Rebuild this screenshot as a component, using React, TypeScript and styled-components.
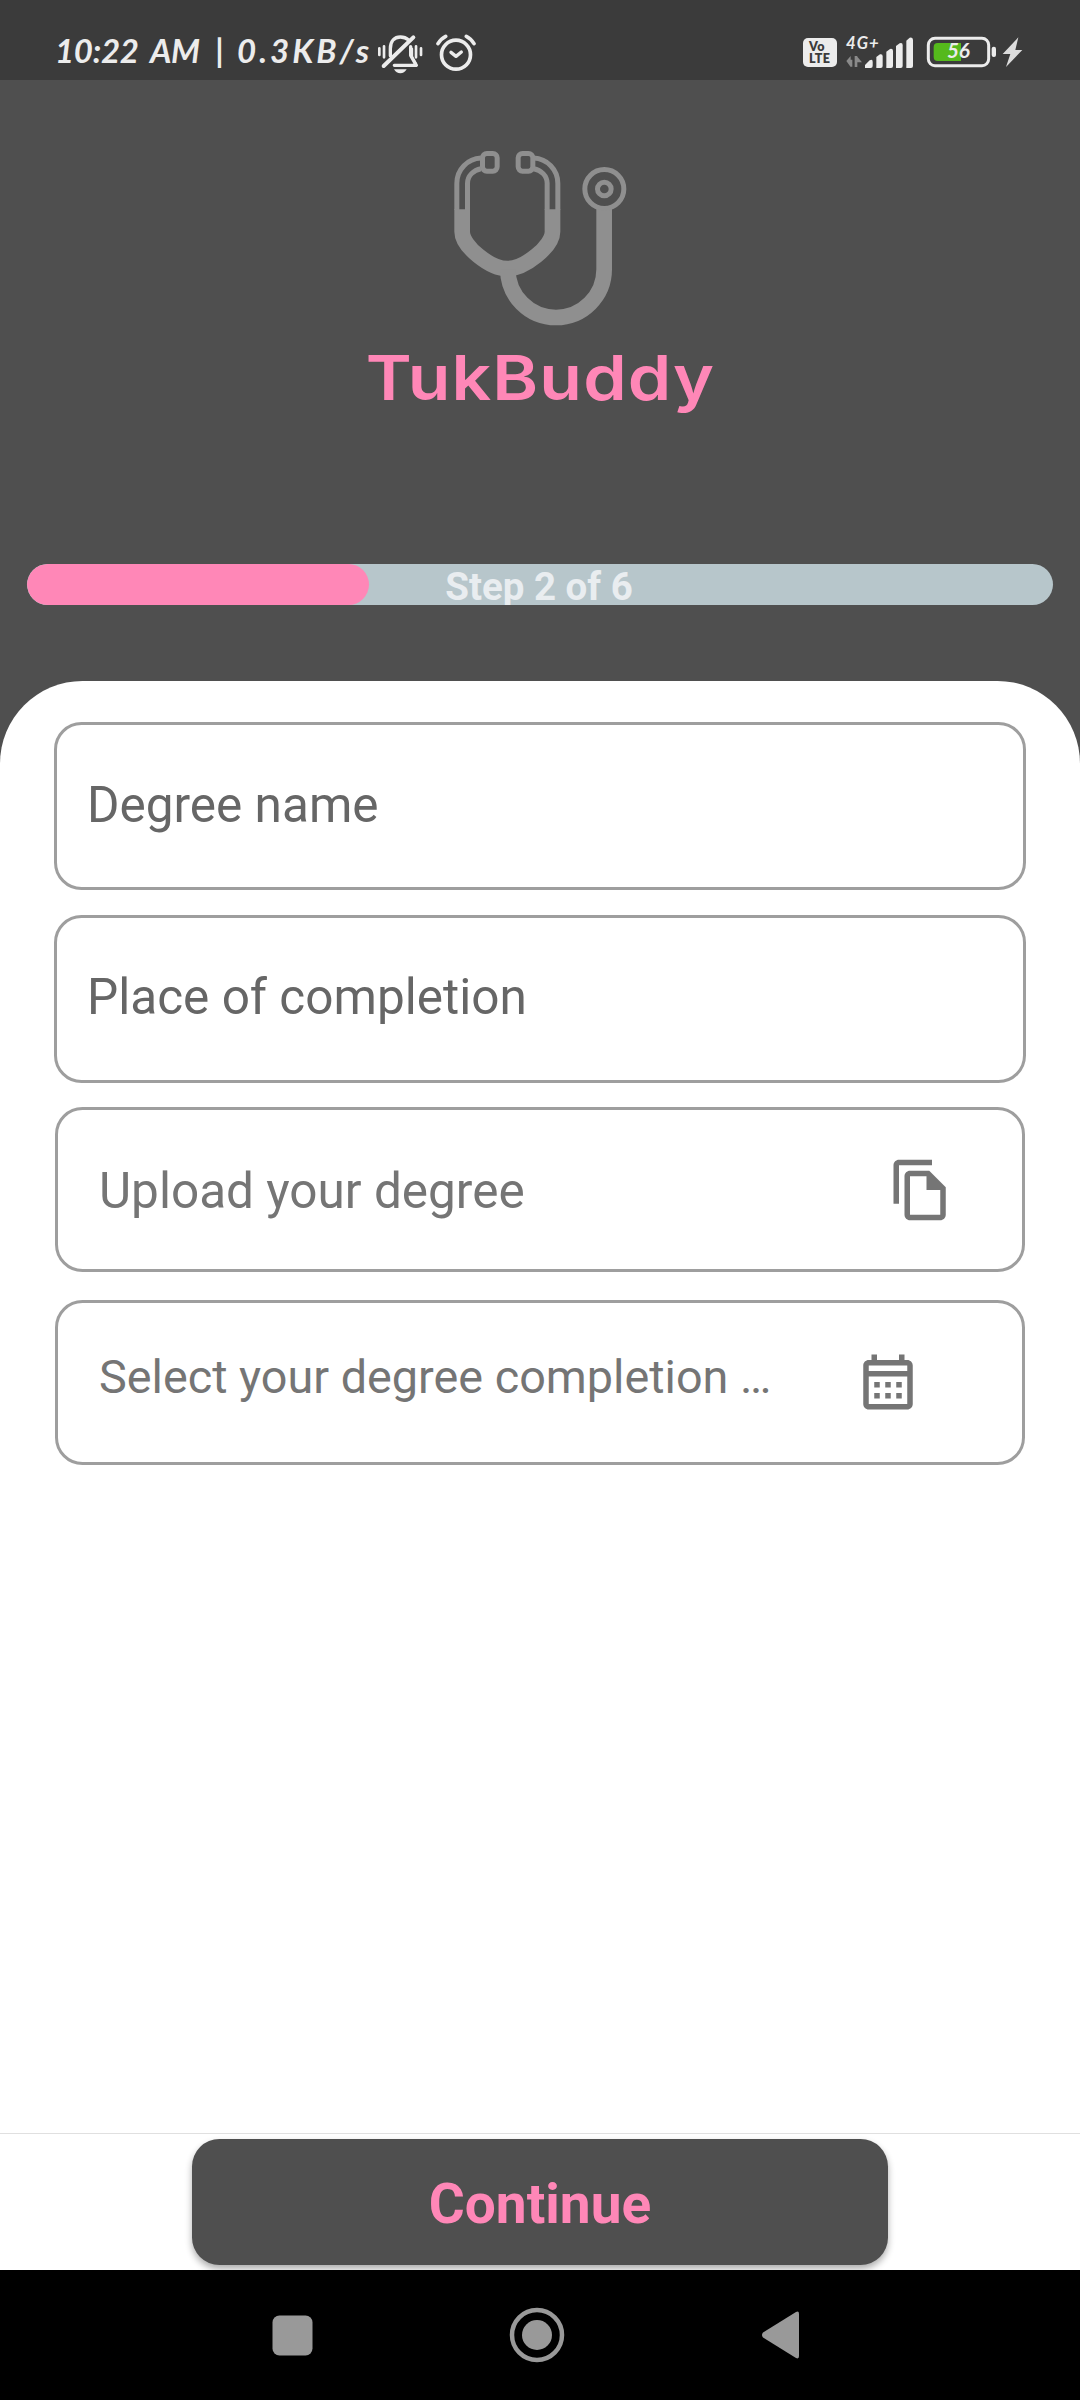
import React from 'react';
import styled, { createGlobalStyle } from 'styled-components';

const Global = createGlobalStyle`
  * { box-sizing: border-box; }
  body { margin: 0; background: #fff; font-family: Roboto, sans-serif; }
`;

const Screen = styled.div`
  width: 1080px;
  height: 2400px;
  display: flex;
  flex-direction: column;
  background: #4f4f4f;
  overflow: hidden;
`;

const StatusBar = styled.header`
  height: 80px;
  flex: none;
  display: flex;
  align-items: flex-start;
  padding: 34px 57px 0 55px;
  background: #3b3b3b;
  color: #ececec;
`;

const Clock = styled.div`
  display: flex;
  width: 322px;
  height: 36px;
  margin-top: -2px;
  font: italic 700 33px/36px Lato, sans-serif;
  white-space: pre;
`;

const ClockPart = styled.span<{ $width: number; $spacing: number }>`
  width: ${(p) => p.$width}px;
  letter-spacing: ${(p) => p.$spacing}px;
`;

const Glyph = styled.svg<{ $gap?: number }>`
  display: block;
  flex: none;
  margin-left: ${(p) => p.$gap ?? 0}px;
`;

const Spacer = styled.div`
  flex: 1;
`;

const VoLte = styled.div`
  width: 34px;
  height: 29px;
  margin-top: 4px;
  padding: 3px 0 0 6px;
  border-radius: 5px;
  background: #ececec;
  color: #3b3b3b;
  font: 800 12.5px/12px Lato, sans-serif;
  letter-spacing: 0.3px;
`;

const Brand = styled.section`
  height: 484px;
  flex: none;
  display: flex;
  flex-direction: column;
  align-items: center;
  padding-top: 70px;
`;

const BrandName = styled.h1`
  margin: 13px 0 0;
  font: 600 62px/76px Inter, sans-serif;
  letter-spacing: 1px;
  color: #ff87b7;
  white-space: nowrap;
  transform: scaleX(1.124);
`;

const Progress = styled.div`
  position: relative;
  flex: none;
  width: 1026px;
  height: 41.25px;
  margin: 0 27px 75.75px;
  border-radius: 21px;
  background: #b7c6cb;
  overflow: hidden;
`;

const ProgressFill = styled.div`
  height: 100%;
  border-radius: 21px;
  background: #ff87b7;
`;

const ProgressLabel = styled.div`
  position: absolute;
  inset: 0;
  padding-right: 2px;
  text-align: center;
  font-size: 38.5px;
  font-weight: 700;
  line-height: 45px;
  color: #e9edf0;
`;

const Sheet = styled.main`
  flex: 1;
  display: flex;
  flex-direction: column;
  padding: 41px 54px 0;
  border-radius: 82.5px 82.5px 0 0;
  background: #fff;
`;

const TextField = styled.div`
  height: 168px;
  margin-bottom: 24.5px;
  padding: 0 30px 3px;
  display: flex;
  align-items: center;
  border: 3px solid #9e9e9e;
  border-radius: 27.5px;
  font-size: 49.5px;
  line-height: 58px;
  color: #666;
`;

const PickerField = styled.div<{ $iconEnd: number }>`
  height: 165px;
  margin: 0 1px 27.5px;
  padding: 0 ${(p) => p.$iconEnd}px 0 41px;
  display: flex;
  align-items: center;
  justify-content: space-between;
  border: 3px solid #9e9e9e;
  border-radius: 27.5px;
  color: #757575;
`;

const PickerText = styled.span<{ $size: number; $drop?: number; $lift?: number }>`
  font-size: ${(p) => p.$size}px;
  line-height: 58px;
  padding-top: ${(p) => p.$drop ?? 0}px;
  padding-bottom: ${(p) => p.$lift ?? 0}px;
  white-space: nowrap;
`;

const Footer = styled.footer`
  height: 137px;
  flex: none;
  padding-top: 5px;
  display: flex;
  justify-content: center;
  align-items: flex-start;
  border-top: 1px solid #e0e0e0;
  background: #fff;
  overflow: hidden;
`;

const ContinueButton = styled.button`
  width: 696px;
  height: 126px;
  padding: 4px 0 0;
  border: 0;
  border-radius: 27.5px;
  background: #4f4f4f;
  box-shadow: 0 4px 7px rgba(0, 0, 0, 0.32);
  color: #ff87b7;
  font: 700 55px/64px Roboto, sans-serif;
`;

const NavBar = styled.nav`
  height: 130px;
  flex: none;
  display: flex;
  align-items: center;
  padding-left: 272px;
  background: #000;
`;

function BellOffIcon() {
  return (
    <Glyph width="46.7" height="40" viewBox="1040 68 140 120" fill="none" stroke="#ececec" strokeLinecap="round">
      <path d="M1080 133V112C1080 88 1093 77 1110 77C1121 77 1128 80 1135 86" strokeWidth="10" />
      <path d="M1149 78L1060 164" strokeWidth="12" />
      <path d="M1141 106V132L1158 162H1092" strokeWidth="10" strokeLinejoin="round" />
      <path d="M1146 112V138L1156 154" strokeWidth="5" />
      <path d="M1091 174H1129Q1122 186 1110 186Q1098 186 1091 174Z" fill="#ececec" stroke="none" />
      <path d="M1047 111V131M1061 105V138M1157 105V138M1172 111V131" strokeWidth="8" />
    </Glyph>
  );
}

function AlarmIcon() {
  return (
    <Glyph $gap={12.5} width="40" height="38.7" viewBox="1219 69 120 116" fill="none" stroke="#ececec" strokeLinecap="round">
      <circle cx="1279" cy="131" r="43.5" strokeWidth="11" />
      <path d="M1264 124L1279 136L1295 123" strokeWidth="10" strokeLinejoin="round" />
      <path d="M1225 98Q1234 83 1248 76M1310 76Q1324 83 1333 98" strokeWidth="11" />
    </Glyph>
  );
}

function SignalIcon() {
  return (
    <Glyph $gap={8} width="70" height="36" viewBox="195 72 210 108">
      <text x="198" y="117" fontFamily="Lato, sans-serif" fontStyle="italic" fontWeight="700" fontSize="50" fill="#ececec" textLength="98">
        4G+
      </text>
      <path d="M199 153L212 138V171ZM205 149H217V170H211ZM224 138H232V171H224ZM230 138L246 157H230Z" fill="#8a8a8a" />
      <g fill="#ececec">
        <path d="M255 174V165L269 151Q278 146 278 155V168Q278 174 272 174Z" />
        <path d="M289 174V141L300 133Q308 131 308 139V168Q308 174 302 174Z" />
        <path d="M319 174V125L330 117Q339 115 339 123V168Q339 174 333 174Z" />
        <path d="M348 174V108L359 100Q368 97 368 106V168Q368 174 362 174Z" />
        <path d="M379 174V92L389 83Q399 80 399 90V168Q399 174 393 174Z" />
      </g>
    </Glyph>
  );
}

function BatteryIcon() {
  return (
    <Glyph $gap={11} width="97" height="36" viewBox="438 72 291 108">
      <rect x="445" y="85" width="181" height="82" rx="20" fill="none" stroke="#ececec" strokeWidth="9" />
      <path d="M473 99H543V153H473Q461 153 461 141V111Q461 99 473 99Z" fill="#55b91c" />
      <rect x="635" y="110" width="13" height="31" rx="6" fill="#ececec" />
      <text x="501" y="145" fontFamily="Lato, sans-serif" fontStyle="italic" fontWeight="700" fontSize="62" fill="#ececec" textLength="68">
        56
      </text>
      <path d="M715 82L668 132H691L678 171L727 120H706Z" fill="#dcdcdc" />
    </Glyph>
  );
}

function Stethoscope() {
  return (
    <Glyph $gap={2} width="173.33" height="176.67" viewBox="341 60 520 530" fill="none" stroke="#8f8f8f">
      <path d="M365.5 238V305C365.5 349 449 416 501 416C553 416 636.5 349 636.5 305V238" strokeWidth="47" />
      <path d="M502.5 418A144.5 144.5 0 0 0 791.5 418V235" strokeWidth="47" />
      <g strokeWidth="15">
        <path d="M349.5 240V160C349.5 118 382 86 422 84" />
        <path d="M381.5 240V160C381.5 137 400 120 422 116" />
        <path d="M652.5 240V160C652.5 118 620 86 580 84" />
        <path d="M620.5 240V160C620.5 137 602 120 580 116" />
        <rect x="426.500" y="70.500" width="44" height="53" rx="13" />
        <rect x="533.5" y="70.500" width="44" height="53" rx="13" />
        <circle cx="792" cy="177" r="58.5" />
        <circle cx="792" cy="177" r="20.5" />
      </g>
    </Glyph>
  );
}

function CopyIcon() {
  return (
    <Glyph width="66" height="66" viewBox="0 0 24 24" fill="currentColor">
      <path d="M16 1H4C2.9 1 2 1.900 2 3V17H4V3H16V1ZM15 5H8C6.900 5 6 5.900 6 7V21C6 22.100 6.900 23 8 23H19C20.100 23 21 22.100 21 21V11L15 5ZM8 21V7H14V12H19V21H8Z" fillRule="evenodd" />
    </Glyph>
  );
}

function CalendarIcon() {
  return (
    <Glyph width="66" height="66" viewBox="0 0 24 24" fill="currentColor">
      <path d="M19 4H18V2H16V4H8V2H6V4H5C3.900 4 3 4.900 3 6V20C3 21.100 3.900 22 5 22H19C20.100 22 21 21.100 21 20V6C21 4.900 20.100 4 19 4ZM19 20H5V10H19V20ZM19 8H5V6H19V8Z" fillRule="evenodd" />
      <path d="M7 12H9V14H7ZM11 12H13V14H11ZM15 12H17V14H15ZM7 16H9V18H7ZM11 16H13V18H11ZM15 16H17V18H15Z" />
    </Glyph>
  );
}

export default function App() {
  const step = 2;
  const total = 6;
  return (
    <>
      <Global />
      <Screen>
        <StatusBar>
          <Clock>
            <ClockPart $width={95} $spacing={-0.3}>10:22</ClockPart>
            <ClockPart $width={65} $spacing={-0.5}>AM</ClockPart>
            <ClockPart $width={22} $spacing={0}>|</ClockPart>
            <ClockPart $width={140} $spacing={3}>0.3KB/s</ClockPart>
          </Clock>
          <BellOffIcon />
          <AlarmIcon />
          <Spacer />
          <VoLte>
            Vo
            <br />
            LTE
          </VoLte>
          <SignalIcon />
          <BatteryIcon />
        </StatusBar>
        <Brand>
          <Stethoscope />
          <BrandName>TukBuddy</BrandName>
        </Brand>
        <Progress>
          <ProgressFill style={{ width: `${100 / 3}%` }} />
          <ProgressLabel>
            Step {step} of {total}
          </ProgressLabel>
        </Progress>
        <Sheet>
          <TextField>Degree name</TextField>
          <TextField>Place of completion</TextField>
          <PickerField $iconEnd={68.5}>
            <PickerText $size={49.5} $drop={2}>Upload your degree</PickerText>
            <CopyIcon />
          </PickerField>
          <PickerField $iconEnd={101}>
            <PickerText $size={46.75} $lift={10}>Select your degree completion …</PickerText>
            <CalendarIcon />
          </PickerField>
        </Sheet>
        <Footer>
          <ContinueButton>Continue</ContinueButton>
        </Footer>
        <NavBar>
          <Glyph width="41" height="41" viewBox="0 0 41 41">
            <rect x="0.500" y="0.500" width="40" height="40" rx="7" fill="#999" />
          </Glyph>
          <Glyph $gap={196} width="56" height="56" viewBox="0 0 56 56">
            <circle cx="28" cy="28" r="25" fill="none" stroke="#999" strokeWidth="4.5" />
            <circle cx="28" cy="28" r="15" fill="#999" />
          </Glyph>
          <Glyph $gap={196} width="40" height="48" viewBox="0 0 40 48">
            <path d="M2 21.500Q0 24 2 26.500L35 47Q38 48.500 38 45V3Q38 -0.500 35 1Z" fill="#999" />
          </Glyph>
        </NavBar>
      </Screen>
    </>
  );
}
